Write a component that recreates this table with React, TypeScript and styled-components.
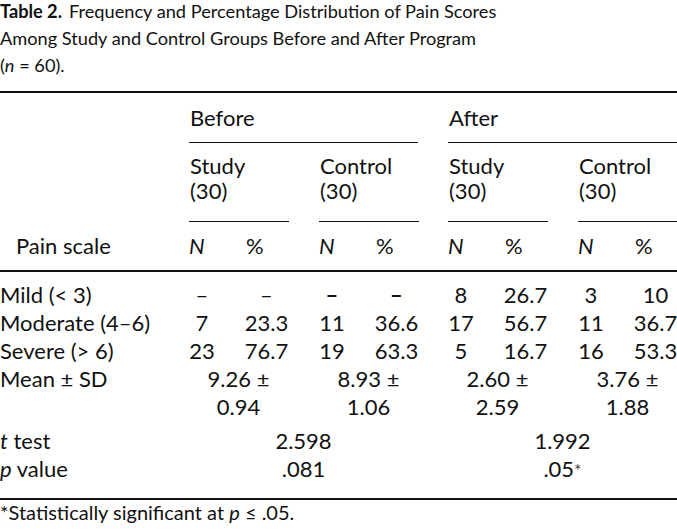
import React from 'react';
import styled, { createGlobalStyle } from 'styled-components';

const COLS = '189px 130px 129px 130px 99px';
const INK = '#111111';

const Global = createGlobalStyle`
  html, body { margin: 0; padding: 0; background: #ffffff; }
  body { font-family: Lato, "Open Sans", "DejaVu Sans", sans-serif; color: ${INK}; }
`;

const Page = styled.div`
  width: 677px;
  height: 530px;
  overflow: hidden;
  font-size: 22px;
`;

const Caption = styled.p`
  margin: -2px 0 12px;
  font-size: 18.2px;
  line-height: 27px;
`;

const CaptionLabel = styled.b`
  font-weight: 700;
  margin-right: 7px;
`;

const Table = styled.div`
  border-top: 2px solid ${INK};
  border-bottom: 2px solid ${INK};
`;

const Grid = styled.div`
  display: grid;
  grid-template-columns: ${COLS};
`;

const SpanHead = styled.div<{ $col: number; $gap: number }>`
  grid-column: ${(p) => p.$col} / span 2;
  margin-right: ${(p) => p.$gap}px;
  padding: 11px 0 11px 1px;
  line-height: 27px;
  border-bottom: 1px solid ${INK};
`;

const GroupHead = styled.div<{ $col: number }>`
  grid-column: ${(p) => p.$col};
  width: 99px;
  padding: 10px 0 18px 1px;
  line-height: 25px;
  border-bottom: 1px solid ${INK};
`;

const ScaleRow = styled(Grid)`
  border-bottom: 2px solid ${INK};
  padding: 10px 0 11px;
  line-height: 27px;
`;

const ScaleLabel = styled.div`
  padding-left: 16px;
`;

const Pair = styled.div`
  display: grid;
  grid-template-columns: 26px 31px 41px;
`;

const Cell = styled.span<{ $slot: 'n' | 'pct'; $head?: boolean; $bold?: boolean }>`
  grid-column: ${(p) => (p.$slot === 'n' ? 1 : 3)};
  display: flex;
  justify-content: ${(p) => (p.$head ? 'flex-start' : 'center')};
  white-space: nowrap;
  font-style: ${(p) => (p.$head && p.$slot === 'n' ? 'italic' : 'normal')};
  font-weight: ${(p) => (p.$bold ? 700 : 400)};
`;

const Body = styled.div`
  padding: 9px 0 13px;
`;

const BodyRow = styled(Grid)<{ $gapTop?: number }>`
  line-height: 28px;
  margin-top: ${(p) => p.$gapTop ?? 0}px;
`;

const RowLabel = styled.div`
  white-space: nowrap;
`;

const Spread = styled.div<{ $col: number; $span: number; $width: number }>`
  grid-column: ${(p) => p.$col} / span ${(p) => p.$span};
  width: ${(p) => p.$width}px;
  text-align: center;
  white-space: nowrap;
`;

const Star = styled.span`
  font-size: 0.8em;
  color: #444;
`;

const Footnote = styled.p`
  margin: 0;
  font-size: 20px;
  line-height: 24px;
`;

type Pct = { n: string; p: string; bold?: boolean };

const rows: { label: string; groups: Pct[] }[] = [
  {
    label: 'Mild (< 3)',
    groups: [
      { n: '–', p: '–' },
      { n: '–', p: '–', bold: true },
      { n: '8', p: '26.7' },
      { n: '3', p: '10' },
    ],
  },
  {
    label: 'Moderate (4–6)',
    groups: [
      { n: '7', p: '23.3' },
      { n: '11', p: '36.6' },
      { n: '17', p: '56.7' },
      { n: '11', p: '36.7' },
    ],
  },
  {
    label: 'Severe (> 6)',
    groups: [
      { n: '23', p: '76.7' },
      { n: '19', p: '63.3' },
      { n: '5', p: '16.7' },
      { n: '16', p: '53.3' },
    ],
  },
];

const means = [
  ['9.26 ±', '0.94'],
  ['8.93 ±', '1.06'],
  ['2.60 ±', '2.59'],
  ['3.76 ±', '1.88'],
];

const groupHeads = ['Study', 'Control', 'Study', 'Control'];

export default function App() {
  return (
    <Page>
      <Global />
      <Caption>
        <CaptionLabel>Table 2.</CaptionLabel>Frequency and Percentage Distribution of Pain Scores
        <br />
        Among Study and Control Groups Before and After Program
        <br />(<i>n</i> = 60).
      </Caption>
      <Table>
        <Grid>
          <div />
          <SpanHead $col={2} $gap={30}>Before</SpanHead>
          <SpanHead $col={4} $gap={0}>After</SpanHead>
        </Grid>
        <Grid>
          <div />
          {groupHeads.map((g, i) => (
            <GroupHead key={i} $col={i + 2}>
              {g}
              <br />
              (30)
            </GroupHead>
          ))}
        </Grid>
        <ScaleRow>
          <ScaleLabel>Pain scale</ScaleLabel>
          {groupHeads.map((_, i) => (
            <Pair key={i}>
              <Cell $slot="n" $head>N</Cell>
              <Cell $slot="pct" $head>%</Cell>
            </Pair>
          ))}
        </ScaleRow>
        <Body>
          {rows.map((r) => (
            <BodyRow key={r.label}>
              <RowLabel>{r.label}</RowLabel>
              {r.groups.map((g, i) => (
                <Pair key={i}>
                  <Cell $slot="n" $bold={g.bold}>{g.n}</Cell>
                  <Cell $slot="pct" $bold={g.bold}>{g.p}</Cell>
                </Pair>
              ))}
            </BodyRow>
          ))}
          <BodyRow>
            <RowLabel>Mean ± SD</RowLabel>
            {means.map((m, i) => (
              <Spread key={i} $col={i + 2} $span={1} $width={99}>
                {m[0]}
                <br />
                {m[1]}
              </Spread>
            ))}
          </BodyRow>
          <BodyRow $gapTop={6}>
            <RowLabel>
              <i>t</i> test
            </RowLabel>
            <Spread $col={2} $span={2} $width={229}>2.598</Spread>
            <Spread $col={4} $span={2} $width={229}>1.992</Spread>
          </BodyRow>
          <BodyRow>
            <RowLabel>
              <i>p</i> value
            </RowLabel>
            <Spread $col={2} $span={2} $width={229}>.081</Spread>
            <Spread $col={4} $span={2} $width={229}>
              .05<Star>*</Star>
            </Spread>
          </BodyRow>
        </Body>
      </Table>
      <Footnote>
        *Statistically significant at <i>p</i> ≤ .05.
      </Footnote>
    </Page>
  );
}
